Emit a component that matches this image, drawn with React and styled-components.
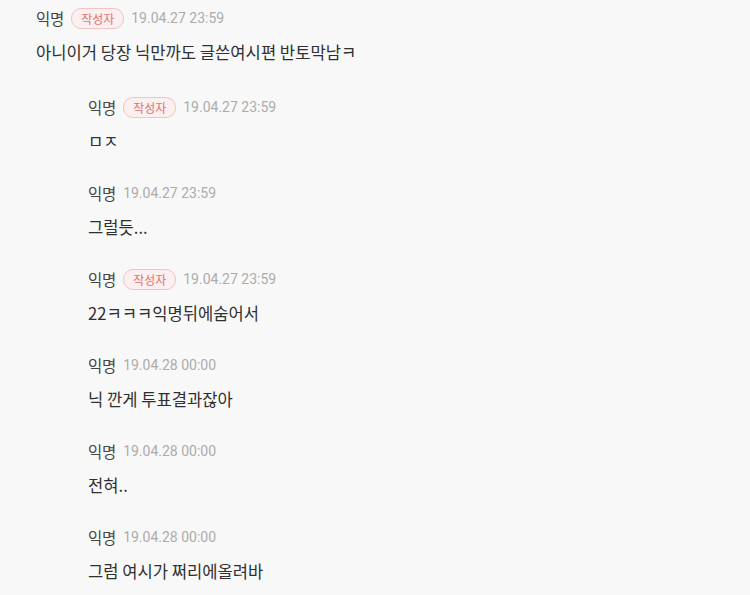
import React from "react";
import styled, { createGlobalStyle } from "styled-components";

const GlobalStyle = createGlobalStyle`
  html, body {
    margin: 0;
    padding: 0;
    background: #f8f8f8;
  }
  body {
    font-family: "Noto Sans CJK KR", "Noto Sans", Roboto, sans-serif;
  }
`;

const Page = styled.main`
  width: 750px;
  height: 595px;
  overflow: hidden;
  background: #f8f8f8;
  padding: 6px 0 0 36px;
  box-sizing: border-box;
`;

const Comment = styled.article`
  display: flex;
  flex-direction: column;
  gap: 10px;
`;

const Header = styled.div`
  display: flex;
  align-items: center;
  height: 24px;
  gap: 7px;
`;

const Name = styled.span`
  font-size: 15.5px;
  color: #444;
  letter-spacing: -0.2px;
`;

const Badge = styled.span`
  display: inline-flex;
  align-items: center;
  height: 19px;
  padding: 0 9px;
  border: 1px solid #f1c4c4;
  border-radius: 10px;
  background: #fcefef;
  color: #e27272;
  font-size: 12px;
`;

const Date = styled.span`
  font-family: Roboto, "Noto Sans", sans-serif;
  font-size: 14px;
  color: #acacac;
`;

const Body = styled.p`
  margin: 0;
  font-size: 16.6px;
  line-height: 24px;
  color: #2f2f2f;
`;

const Replies = styled.div`
  display: flex;
  flex-direction: column;
  gap: 28px;
  margin-left: 52px;
  padding-top: 31px;
`;

const replies = [
  { author: true, date: "19.04.27 23:59", text: "ㅁㅈ" },
  { author: false, date: "19.04.27 23:59", text: "그럴듯..." },
  { author: true, date: "19.04.27 23:59", text: "22ㅋㅋㅋ익명뒤에숨어서" },
  { author: false, date: "19.04.28 00:00", text: "닉 깐게 투표결과잖아" },
  { author: false, date: "19.04.28 00:00", text: "전혀.." },
  { author: false, date: "19.04.28 00:00", text: "그럼 여시가 쩌리에올려바" },
];

const CommentItem = ({ author, date, text }) => (
  <Comment>
    <Header>
      <Name>익명</Name>
      {author && <Badge>작성자</Badge>}
      <Date>{date}</Date>
    </Header>
    <Body>{text}</Body>
  </Comment>
);

const App = () => {
  return (
    <Page>
      <GlobalStyle />
      <CommentItem
        author
        date="19.04.27 23:59"
        text="아니이거 당장 닉만까도 글쓴여시편 반토막남ㅋ"
      />
      <Replies>
        {replies.map((r, i) => (
          <CommentItem key={i} {...r} />
        ))}
      </Replies>
    </Page>
  );
};

export default App;
